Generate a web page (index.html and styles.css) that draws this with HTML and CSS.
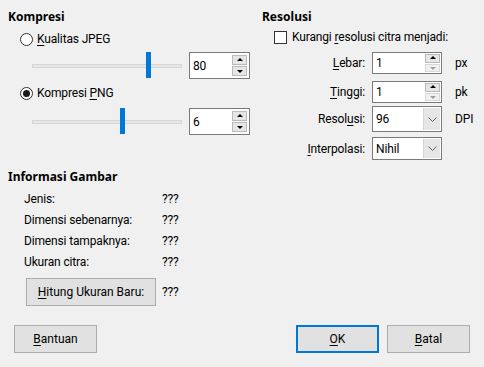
FILE: index.html
```html
<!DOCTYPE html>
<html>
<head>
<meta charset="UTF-8">
<title>Kompres Gambar</title>
<link rel="stylesheet" href="styles.css">
</head>
<body>
<div class="dialog">
    <div class="top">
        <div class="kompresi">
            <div class="title">Kompresi</div>
            <div class="opt-row"><span class="radio"></span><span><u>K</u>ualitas JPEG</span></div>
            <div class="slider-row">
                <div class="slider"><div class="track"></div><div class="thumb" style="left:114px"></div></div>
                <div class="spin big"><span class="val">80</span><span class="btns"><span class="sb up"></span><span class="sb down"></span></span></div>
            </div>
            <div class="opt-row second"><span class="radio on"></span><span>Kompresi <u>P</u>NG</span></div>
            <div class="slider-row second">
                <div class="slider"><div class="track"></div><div class="thumb" style="left:88px"></div></div>
                <div class="spin big"><span class="val">6</span><span class="btns"><span class="sb up"></span><span class="sb down"></span></span></div>
            </div>
        </div>
        <div class="resolusi">
            <div class="title">Resolusi</div>
            <div class="opt-row check-row"><span class="check"></span><span>Kurangi <u>r</u>esolusi citra menjadi:</span></div>
            <div class="frow r1">
                <div class="lbl"><u>L</u>ebar:</div>
                <div class="spin small"><span class="val">1</span><span class="btns"><span class="sb up"></span><span class="sb down off"></span></span></div>
                <div class="unit">px</div>
            </div>
            <div class="frow r2">
                <div class="lbl"><u>T</u>inggi:</div>
                <div class="spin small"><span class="val">1</span><span class="btns"><span class="sb up"></span><span class="sb down off"></span></span></div>
                <div class="unit">pk</div>
            </div>
            <div class="frow r3">
                <div class="lbl">Resol<u>u</u>si:</div>
                <div class="combo"><span class="val">96</span><span class="drop"><svg width="9" height="5" viewBox="0 0 9 5"><polyline points="0.5,0.5 4.5,4.5 8.5,0.5" fill="none" stroke="#606060" stroke-width="1"/></svg></span></div>
                <div class="unit">DPI</div>
            </div>
            <div class="frow r4">
                <div class="lbl"><u>I</u>nterpolasi:</div>
                <div class="combo"><span class="val">Nihil</span><span class="drop"><svg width="9" height="5" viewBox="0 0 9 5"><polyline points="0.5,0.5 4.5,4.5 8.5,0.5" fill="none" stroke="#606060" stroke-width="1"/></svg></span></div>
            </div>
        </div>
    </div>
    <div class="info">
        <div class="title">Informasi Gambar</div>
        <div class="info-grid">
            <div>Jenis:</div><div>???</div>
            <div>Dimensi sebenarnya:</div><div>???</div>
            <div>Dimensi tampaknya:</div><div>???</div>
            <div>Ukuran citra:</div><div>???</div>
        </div>
        <div class="calc-row">
            <button class="btn calc"><u>H</u>itung Ukuran Baru:</button>
            <span>???</span>
        </div>
    </div>
    <div class="footer">
        <button class="btn"><u>B</u>antuan</button>
        <div class="spacer"></div>
        <button class="btn default"><u>O</u>K</button>
        <button class="btn"><u>B</u>atal</button>
    </div>
</div>
</body>
</html>
```

FILE: styles.css
```css
html,body{margin:0;padding:0;}
body{background:#f0f0f0;color:#000;font-family:Roboto,"Liberation Sans",sans-serif;font-size:12px;letter-spacing:-0.15px;}
u{text-decoration:underline;text-underline-offset:2px;}

.dialog{width:484px;height:367px;box-sizing:border-box;padding:9px 0 0 8px;display:flex;flex-direction:column;}
.title{font-family:"Noto Sans","Liberation Sans",sans-serif;font-weight:bold;line-height:16px;height:16px;letter-spacing:0;}

.top{display:flex;}
.kompresi{width:242px;}
.resolusi{margin-left:12px;width:222px;}

.opt-row{display:flex;align-items:center;height:16px;line-height:16px;margin:6px 0 0 12px;}
.radio{width:11px;height:11px;border:1px solid #333;border-radius:50%;background:#fff;margin-right:4px;position:relative;flex:none;}
.radio.on::after{content:"";position:absolute;left:2px;top:2px;width:7px;height:7px;border-radius:50%;background:#1a1a1a;}
.check{width:11px;height:11px;border:1px solid #333;background:#fff;margin-right:5px;flex:none;}
.check-row{margin-top:4px;}

.slider-row{display:flex;align-items:center;margin:5px 0 0 24px;height:27px;}
.slider-row.second{margin-top:7px;}
.slider{position:relative;width:150px;height:27px;margin-right:7px;}
.track{position:absolute;left:0;right:0;top:12px;height:2px;background:#e7e7e7;border:1px solid #d6d6d6;}
.thumb{position:absolute;top:0;width:5px;height:26px;background:#0078d7;}

.spin{display:flex;align-items:stretch;background:#fff;border:1px solid #7a7a7a;box-sizing:border-box;}
.spin .val{flex:1;padding-left:3px;display:flex;align-items:center;}
.spin .btns{display:flex;flex-direction:column;gap:1px;width:15px;padding:2px 2px 2px 0;}
.sb{flex:1;background:#e6e6e6;border:1px solid #b9b9b9;position:relative;}
.sb::after{content:"";position:absolute;left:50%;top:50%;margin:-2px 0 0 -3px;border-left:3px solid transparent;border-right:3px solid transparent;}
.sb.up::after{border-bottom:3px solid #000;}
.sb.down::after{border-top:3px solid #000;margin-top:-1px;}
.sb.off{background:#f0f0f0;border-color:#d9d9d9;}
.sb.off::after{border-top-color:#a0a0a0;}
.spin.big{width:61px;height:27px;}
.spin.small .btns{padding:1px 1px 1px 0;}

.frow{display:flex;}
.frow.r1{height:22px;margin-top:7px;}
.frow.r2{height:22px;margin-top:7px;}
.frow.r3{height:26px;margin-top:3px;}
.frow.r4{height:23px;margin-top:5px;}
.lbl{width:110px;box-sizing:border-box;display:flex;align-items:center;justify-content:flex-end;padding-right:7px;}
.unit{display:flex;align-items:center;padding-left:13px;}
.frow .spin,.frow .combo{width:70px;}
.combo{display:flex;background:#fff;border:1px solid #7a7a7a;box-sizing:border-box;}
.combo .val{flex:1;display:flex;align-items:center;padding-left:3px;}
.drop{width:16px;background:#e6e6e6;border-left:1px solid #d4d4d4;display:flex;align-items:center;justify-content:center;margin:1px;margin-left:0;}

.info{margin-top:9px;}
.info-grid{display:grid;grid-template-columns:138px auto;grid-auto-rows:21px;align-items:center;margin:3px 0 0 16px;}
.calc-row{display:flex;align-items:center;margin:6px 0 0 18px;}
.calc-row span{margin-left:6px;}

.btn{font:inherit;color:#000;background:#e1e1e1;border:1px solid #adadad;box-sizing:border-box;padding:0;height:28px;width:83px;}
.calc{width:130px;height:28px;}
.footer{display:flex;margin:19px 0 0 6px;}
.footer .spacer{flex:1;}
.footer .btn + .btn{margin-left:8px;}
.footer .default{border:2px solid #0078d7;}
.footer .btn:last-child{margin-right:14px;}
```
